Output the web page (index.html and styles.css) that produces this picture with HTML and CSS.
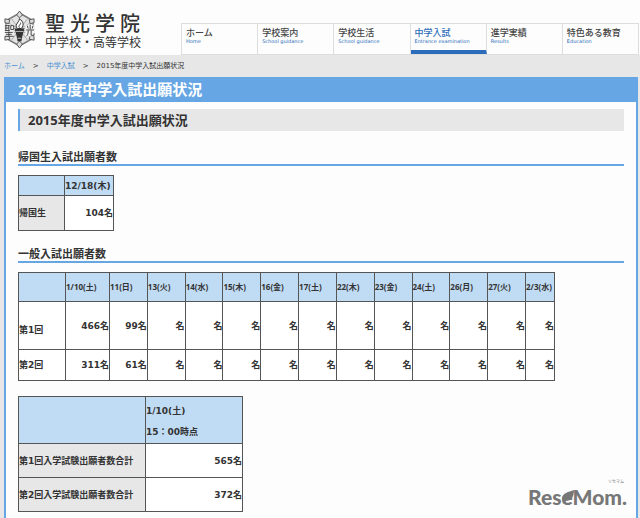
FILE: index.html
```
<!DOCTYPE html>
<html lang="ja">
  <head>
    <meta charset="utf-8" />
    <title>2015年度中学入試出願状況</title>
    <link rel="stylesheet" href="styles.css">
  </head>
  <body>
    <header class="header">
      <div class="brand">
        <svg class="emblem" viewBox="0 0 34 38">
          <g fill="none" stroke="#555">
            <path d="M17 2 31 10V28L17 36 3 28V10Z" fill="#e4e4e4" stroke="#777" stroke-width="1.5" />
            <path d="M17 1V37M2 10 32 28M32 10 2 28M8 7 26 31M26 7 8 31M3 16 31 22M31 16 3 22" stroke="#aaa" />
            <path d="M17 0l3 4-3 3-3-3zM17 38l3-4-3-3-3 3zM2 8l5 1-1 4-4-1zM32 8l-5 1 1 4 4-1zM2 30l5-1-1-4-4 1zM32 30l-5-1 1-4 4 1z" fill="#ddd" />
          </g>
          <path d="M1 14h10v12H1zM23 14h10v12H23z" fill="#f2f2f2" />
          <g fill="none" stroke="#444">
            <path d="M2 15h5M3 15v5M6 15v5M2 17.500h4M2 20h5M8 15h3v4H8zM2 22h8M3 24h6M2 26h9M6 21v5" />
            <path d="M28 14v5M25 15l1 3M31 15l-1 3M24 19.500h8M26 20c0 4-1 5-2 6M29 20v5h3v-2" />
          </g>
          <path d="M12 18h10l-2 8-1 5h-4l-1-5z" fill="#333" />
          <path d="M17 8c4 3 5 6 2 10h-4c-4-4 1-5 2-10z" fill="#fff" stroke="#333" />
          <path d="M18 12c1 2-3 3-1 5" fill="none" stroke="#333" />
          <path d="M13 21h8M15 28h4" stroke="#bbb" />
        </svg>
        <div class="brand-text">
          <div class="brand-name">聖光学院</div>
          <div class="brand-sub">中学校・高等学校</div>
        </div>
      </div>
      <nav class="nav">
        <a class="nav-item" href="#">ホーム<span class="nav-en">Home</span></a>
        <a class="nav-item" href="#">学校案内<span class="nav-en">School guidance</span></a>
        <a class="nav-item" href="#">学校生活<span class="nav-en">School guidance</span></a>
        <a class="nav-item active" href="#">中学入試<span class="nav-en">Entrance examination</span></a>
        <a class="nav-item" href="#">進学実績<span class="nav-en">Results</span></a>
        <a class="nav-item" href="#">特色ある教育<span class="nav-en">Education</span></a>
      </nav>
    </header>

    <div class="breadcrumb">
      <a href="#">ホーム</a>
      <span>&gt;</span>
      <a href="#">中学入試</a>
      <span>&gt;</span>
      <span>2015年度中学入試出願状況</span>
    </div>

    <main class="main">
      <h1 class="page-title">2015年度中学入試出願状況</h1>
      <div class="content">
        <h2 class="sub-title">2015年度中学入試出願状況</h2>

        <h3 class="section-title">帰国生入試出願者数</h3>
        <table class="table returnee">
          <tr class="row-date">
            <th class="col-name"></th>
            <th class="col-count">12/18(木)</th>
          </tr>
          <tr class="row-count">
            <th class="label">帰国生</th>
            <td>104名</td>
          </tr>
        </table>

        <h3 class="section-title">一般入試出願者数</h3>
        <table class="table general">
          <tr class="row-date">
            <th class="col-name"></th>
            <th class="col-first">1/10(土)</th>
            <th>11(日)</th>
            <th>13(火)</th>
            <th>14(水)</th>
            <th>15(木)</th>
            <th>16(金)</th>
            <th>17(土)</th>
            <th>22(木)</th>
            <th>23(金)</th>
            <th>24(土)</th>
            <th>26(月)</th>
            <th>27(火)</th>
            <th class="col-last">2/3(水)</th>
          </tr>
          <tr class="row-first">
            <th class="label plain">第1回</th>
            <td>466名</td>
            <td>99名</td>
            <td>名</td>
            <td>名</td>
            <td>名</td>
            <td>名</td>
            <td>名</td>
            <td>名</td>
            <td>名</td>
            <td>名</td>
            <td>名</td>
            <td>名</td>
            <td>名</td>
          </tr>
          <tr class="row-second">
            <th class="label plain">第2回</th>
            <td>311名</td>
            <td>61名</td>
            <td>名</td>
            <td>名</td>
            <td>名</td>
            <td>名</td>
            <td>名</td>
            <td>名</td>
            <td>名</td>
            <td>名</td>
            <td>名</td>
            <td>名</td>
            <td>名</td>
          </tr>
        </table>

        <table class="table total">
          <tr class="row-date">
            <th class="col-name"></th>
            <th class="col-count">1/10(土)<br>15：00時点</th>
          </tr>
          <tr class="row-count">
            <th class="label">第1回入学試験出願者数合計</th>
            <td>565名</td>
          </tr>
          <tr class="row-count">
            <th class="label">第2回入学試験出願者数合計</th>
            <td>372名</td>
          </tr>
        </table>
      </div>
    </main>

    <div class="watermark">
      <span class="watermark-ruby">リセマム</span>
      <span class="watermark-name">ReseMom.</span>
      <svg class="watermark-leaf" viewBox="0 0 12 14">
        <path d="M0 8C1 3 6 2 12 0c0 7-3 11-8 11L1 14z" fill="#777" />
      </svg>
    </div>
  </body>
</html>
```
FILE: styles.css
```
:root {
  --blue: #66a6e4;
  --blue-dark: #2b6dba;
  --line: #555;
  --head: #c0dbf4;
  --gray: #e7e7e7;
  --text: #333;
  --jp: 'Noto Sans CJK JP', sans-serif;
}

* {
  box-sizing: border-box;
}

body {
  position: relative;
  display: flex;
  flex-direction: column;
  height: 100vh;
  margin: 0;
  overflow: hidden;
  background: var(--gray);
  color: var(--text);
  font-family: 'Open Sans', var(--jp);
}

a {
  color: #4a90d0;
  text-decoration: none;
}

/* Header */
.header {
  display: flex;
  flex-shrink: 0;
  justify-content: space-between;
  align-items: flex-end;
  height: 55px;
  padding-right: 1px;
  background: #fdfdfd;
}

.brand {
  display: flex;
  gap: 9px;
  padding: 0 0 6px 3px;
}

.emblem {
  width: 33px;
  height: 37px;
}

.brand-text {
  font-family: var(--jp);
}

.brand-name {
  font-size: 20px;
  font-weight: 500;
  line-height: 24px;
  letter-spacing: 5px;
}

.brand-sub {
  font-size: 12px;
  line-height: 14px;
}

.nav {
  display: flex;
  flex: 1;
  max-width: 458px;
  height: 32px;
  border: 1px solid #ddd;
  border-right: none;
}

.nav-item {
  flex: 1;
  padding: 3px 0 0 4px;
  border-right: 1px solid #ddd;
  color: #444;
  font-family: var(--jp);
  font-size: 9px;
  font-weight: 500;
  line-height: 11px;
  white-space: nowrap;
}

.nav-item.active {
  border-bottom: 4px solid var(--blue-dark);
  color: var(--blue-dark);
}

.nav-en {
  display: block;
  color: var(--blue-dark);
  font-family: 'DejaVu Sans', sans-serif;
  font-size: 5px;
  font-weight: 400;
  line-height: 6px;
}

/* Breadcrumb */
.breadcrumb {
  display: flex;
  flex-shrink: 0;
  gap: 8px;
  height: 22px;
  padding-left: 4px;
  font-family: 'DejaVu Sans', var(--jp);
  font-size: 7px;
  line-height: 23px;
}

/* Main */
.main {
  flex: 1;
  margin: 0 2px 0 4px;
  border: 2px solid var(--blue);
  border-top: none;
  border-bottom: none;
  background: #fdfdfd;
}

.page-title {
  margin: 0;
  padding-left: 12px;
  background: var(--blue);
  color: #fff;
  font-size: 15px;
  line-height: 25px;
}

.content {
  padding: 7px 12px 0;
}

.sub-title {
  margin: 0 0 18px;
  padding-left: 8px;
  border-left: 2px solid var(--blue);
  background: var(--gray);
  font-size: 13px;
  line-height: 22px;
}

.section-title {
  margin: 0 0 9px;
  border-bottom: 2px solid var(--blue);
  font-size: 11px;
  line-height: 15px;
}

/* Tables */
.table {
  margin-bottom: 15px;
  border-collapse: collapse;
  table-layout: fixed;
  font-family: 'DejaVu Sans', var(--jp);
  font-size: 9px;
  font-weight: 700;
  line-height: 12px;
}

.table th,
.table td {
  padding: 0;
  border: 1px solid var(--line);
  white-space: nowrap;
}

.table th {
  background: var(--head);
  text-align: left;
}

.table td {
  background: #fff;
  text-align: right;
}

.table .label {
  background: var(--gray);
}

.table .plain {
  background: #fff;
}

.returnee {
  width: 96px;
}

.returnee .col-name {
  width: 46px;
}

.returnee .row-date {
  height: 20px;
}

.returnee .row-count {
  height: 35px;
}

.general {
  width: 537px;
}

.general .col-name {
  width: 47px;
}

.general .col-first {
  width: 44px;
}

.general .col-last {
  width: 29px;
}

.general .row-date {
  height: 29px;
  font-family: 'Open Sans', var(--jp);
  font-size: 8px;
}

.general .row-first {
  height: 48px;
}

.general .row-first .label {
  padding-top: 8px;
}

.general .row-second {
  height: 31px;
}

.total {
  width: 225px;
}

.total .row-date {
  height: 46px;
  line-height: 21px;
}

.total .col-name {
  width: 127px;
}

.total .row-date th {
  padding-top: 4px;
}

.total .row-count {
  height: 34px;
}

/* Watermark */
.watermark {
  position: absolute;
  right: 13px;
  bottom: 9px;
  display: flex;
  flex-direction: column;
  align-items: flex-end;
  color: #777;
  font-family: 'Lato', var(--jp);
}

.watermark-ruby {
  padding-right: 3px;
  font-size: 4px;
  line-height: 6px;
}

.watermark-name {
  font-size: 21px;
  font-weight: 900;
  line-height: 24px;
}

.watermark-leaf {
  position: absolute;
  left: 34px;
  bottom: 5px;
  width: 12px;
  height: 14px;
}
```
